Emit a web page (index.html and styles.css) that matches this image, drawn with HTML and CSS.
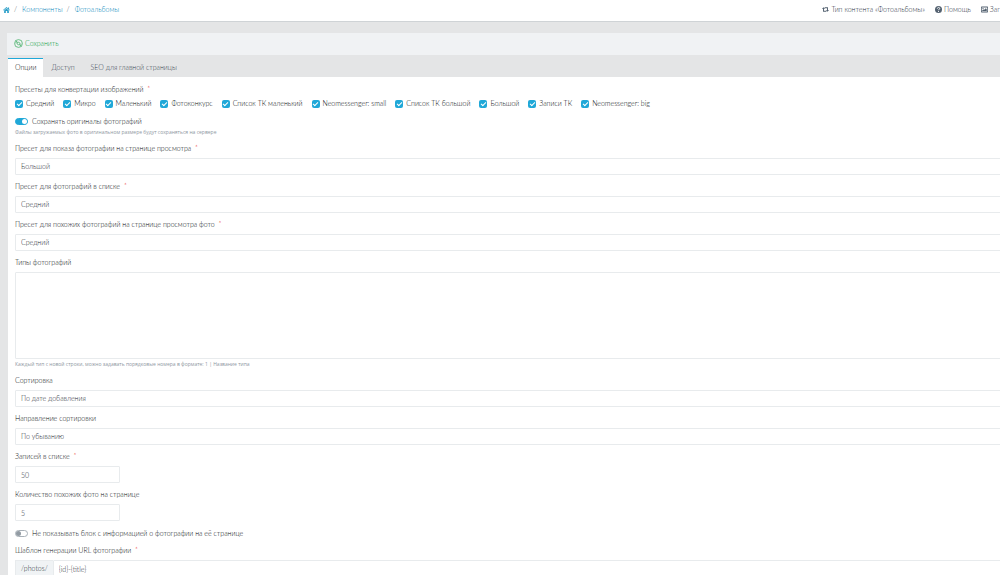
FILE: index.html
```html
<!DOCTYPE html>
<html lang="ru">
<head>
<meta charset="utf-8">
<title>Фотоальбомы</title>
<link rel="stylesheet" href="styles.css">
</head>
<body>
<header class="header">
  <nav class="crumbs">
    <a href="#" class="home" aria-label="Главная"><svg viewBox="0 0 16 14"><path d="M8 0 16 7l-1 1.3L8 2.4 1 8.3 0 7zM11.5 1H14v4l-2.5-2zM8 3.6l5.500 4.600V14H9.600V9.500H6.400V14H2.500V8.200z"/></svg></a>
    <span class="sep">/</span>
    <a href="#">Компоненты</a>
    <span class="sep">/</span>
    <a href="#">Фотоальбомы</a>
  </nav>
  <nav class="links">
    <a href="#"><svg viewBox="0 0 16 12"><path d="M3.500 1 7 5H4.600v4H9l1.600 2H2.400V5H0zM12.500 11 9 7h2.400V3H7L5.400 1h8.200v6H16z"/></svg>Тип контента «Фотоальбомы»</a>
    <a href="#"><svg viewBox="0 0 14 14"><circle cx="7" cy="7" r="7"/><path class="line" d="M4.600 5.200C4.700 2 9.500 2.200 9.400 5 9.300 6.700 7 6.500 7 8.500M7 10v1.800"/></svg>Помощь</a>
    <a href="#"><svg viewBox="0 0 14 12"><path fill-rule="evenodd" d="M1 0h12l1 1v10l-1 1H1l-1-1V1zm.5 2v8h11V2zM2.500 9V7.500l2-2L6 7l3.500-3.500 2 2V9zM3 3h2v2H3z"/></svg>Заг</a>
  </nav>
</header>
<main class="main">
  <div class="toolbar">
    <button type="button" class="save"><svg viewBox="0 0 18 18"><circle cx="9" cy="9" r="7.800"/><circle cx="9" cy="9" r="2.500"/><path d="M3.500 3.500 7.200 7.200M10.800 10.800l3.700 3.700M4 9a5 5 0 0 1 2-4M14 9a5 5 0 0 1-2 4"/></svg>Сохранить</button>
  </div>
  <div class="tabs" role="tablist">
    <button type="button" role="tab" class="tab active" aria-selected="true">Опции</button>
    <button type="button" role="tab" class="tab">Доступ</button>
    <button type="button" role="tab" class="tab">SEO для главной страницы</button>
  </div>
  <form class="panel">
    <fieldset class="presets">
      <legend class="label">Пресеты для конвертации изображений <span class="req">*</span></legend>
      <div class="checks">
        <label><input type="checkbox" class="check" checked>Средний</label>
        <label><input type="checkbox" class="check" checked>Микро</label>
        <label><input type="checkbox" class="check" checked>Маленький</label>
        <label><input type="checkbox" class="check" checked>Фотоконкурс</label>
        <label><input type="checkbox" class="check" checked>Список ТК маленький</label>
        <label><input type="checkbox" class="check" checked>Neomessenger: small</label>
        <label><input type="checkbox" class="check" checked>Список ТК большой</label>
        <label><input type="checkbox" class="check" checked>Большой</label>
        <label><input type="checkbox" class="check" checked>Записи ТК</label>
        <label><input type="checkbox" class="check" checked>Neomessenger: big</label>
      </div>
    </fieldset>
    <div class="field">
      <label class="toggle"><input type="checkbox" class="switch" checked>Сохранять оригиналы фотографий</label>
      <p class="hint">Файлы загружаемых фото в оригинальном размере будут сохраняться на сервере</p>
    </div>
    <div class="field">
      <label class="label" for="view">Пресет для показа фотографии на странице просмотра <span class="req">*</span></label>
      <select class="control" id="view"><option>Большой</option></select>
    </div>
    <div class="field">
      <label class="label" for="list">Пресет для фотографий в списке <span class="req">*</span></label>
      <select class="control" id="list"><option>Средний</option></select>
    </div>
    <div class="field">
      <label class="label" for="related">Пресет для похожих фотографий на странице просмотра фото <span class="req">*</span></label>
      <select class="control" id="related"><option>Средний</option></select>
    </div>
    <div class="field">
      <label class="label" for="types">Типы фотографий</label>
      <textarea class="control area" id="types"></textarea>
      <p class="hint">Каждый тип с новой строки, можно задавать порядковые номера в формате: 1 | Название типа</p>
    </div>
    <div class="field">
      <label class="label" for="sort">Сортировка</label>
      <select class="control" id="sort"><option>По дате добавления</option></select>
    </div>
    <div class="field">
      <label class="label" for="dir">Направление сортировки</label>
      <select class="control" id="dir"><option>По убыванию</option></select>
    </div>
    <div class="field">
      <label class="label" for="limit">Записей в списке <span class="req">*</span></label>
      <input type="text" class="control short" id="limit" value="50">
    </div>
    <div class="field">
      <label class="label" for="count">Количество похожих фото на странице</label>
      <input type="text" class="control short" id="count" value="5">
    </div>
    <div class="field">
      <label class="toggle"><input type="checkbox" class="switch">Не показывать блок с информацией о фотографии на её странице</label>
    </div>
    <div class="field">
      <label class="label" for="url">Шаблон генерации URL фотографии <span class="req">*</span></label>
      <div class="group"><span class="prefix">/photos/</span><input type="text" class="control" id="url" value="{id}-{title}"></div>
    </div>
  </form>
</main>
</body>
</html>
```
FILE: styles.css
```css
* { box-sizing: border-box; }
html { overflow: hidden; }
body {
  margin: 0;
  overflow: hidden;
  background: #e4e5e6;
  color: #05090c;
  font: 300 7px/11px Lato, "Noto Sans", sans-serif;
}
a { color: #0083b8; text-decoration: none; }
button, input, select, textarea { font: inherit; color: inherit; margin: 0; }
.header {
  display: flex;
  align-items: center;
  height: 22px;
  padding: 0 0 2px 3px;
  background: #fff;
  border-bottom: 1px solid #cfd3d6;
  white-space: nowrap;
}
.crumbs { display: flex; align-items: center; }
.home { display: flex; }
.home svg { width: 7px; height: 6px; fill: #2b9fc9; }
.sep { color: #2d3945; margin: 0 5px 0 4px; }
.links { display: flex; gap: 10px; margin-left: auto; }
.links a { display: flex; align-items: center; gap: 2px; color: #1d2a38; }
.links svg { width: 7px; height: 7px; fill: #536170; }
.links .line { fill: none; stroke: #fff; stroke-width: 2; }
.main { padding: 11px 0 0 7px; }
.toolbar { display: flex; padding: 0 7px 1px; height: 22px; background: #f0f2f4; }
.save {
  display: flex;
  align-items: center;
  gap: 2px;
  padding: 0;
  border: 0;
  background: none;
  color: #0c9c3c;
}
.save svg { width: 9px; height: 9px; fill: none; stroke: #4db36d; stroke-width: 1.6; }
.tabs { display: flex; margin: 3px 0 0 1px; height: 19px; }
.tab {
  padding: 0 8px 2px;
  border: 0;
  border-top: 1px solid transparent;
  background: none;
  color: #34414e;
}
.tab.active { padding: 0 7px 2px; border-top-color: #20a8d8; background: #fff; color: #05090c; }
.panel {
  display: flex;
  flex-direction: column;
  gap: 6px;
  margin: 0 -20px 0 1px;
  padding: 7px;
  background: #fff;
}
.presets { border: 0; margin: 0; padding: 0; }
.label { display: block; padding: 0; margin-bottom: 4px; }
.presets .label { margin-bottom: 3px; }
.req { color: #e80000; margin-left: 2px; }
.checks { display: flex; gap: 9px; white-space: nowrap; }
.checks label { display: flex; align-items: center; gap: 3px; }
.check {
  appearance: none;
  width: 8px;
  height: 8px;
  border-radius: 2px;
  background: #20a8d8;
  display: grid;
  place-items: center;
}
.check::after {
  content: "";
  width: 4px;
  height: 2px;
  border: solid #fff;
  border-width: 0 0 1px 1px;
  transform: rotate(-45deg);
}
.toggle { display: flex; align-items: center; gap: 4px; height: 12px; }
.switch {
  appearance: none;
  display: flex;
  width: 13px;
  height: 7px;
  border: 1px solid #a8b0b7;
  border-radius: 4px;
  background: #fff;
}
.switch::before { content: ""; width: 5px; height: 5px; border-radius: 50%; background: #929ba3; }
.switch:checked { justify-content: flex-end; border-color: #20a8d8; background: #20a8d8; }
.switch:checked::before { background: #fff; }
.hint { margin: 0; color: #8f989f; font: 5px/10px "Open Sans", "Noto Sans", sans-serif; }
.control {
  display: block;
  appearance: none;
  width: 100%;
  height: 17px;
  padding: 0 5px;
  border: 1px solid #e8ebed;
  border-radius: 1px;
  background: #fff;
  color: #1c2731;
  outline: 0;
}
.area { height: 87px; resize: none; }
.short { width: 105px; }
.group { display: flex; }
.prefix {
  padding: 2px 5px;
  border: 1px solid #e8ebed;
  border-right: 0;
  background: #f0f3f5;
  color: #1c2731;
}
```
